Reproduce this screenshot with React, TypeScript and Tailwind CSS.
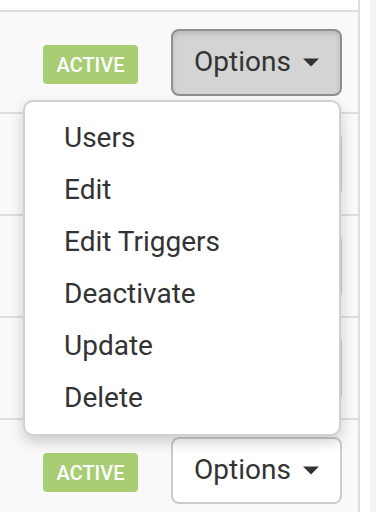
const rows = [0, 1, 2, 3, 4]
const menuItems = ["Users", "Edit", "Edit Triggers", "Deactivate", "Update", "Delete"]

function Caret() {
  return (
    <svg width="16" height="9" viewBox="0 0 16 9" className="shrink-0">
      <path d="M0 0.5 L16 0.5 L8 8.5 Z" fill="#333" />
    </svg>
  )
}

function OptionsButton({ open }: { open?: boolean }) {
  return (
    <button
      className={
        open
          ? "flex h-[67px] w-[171px] items-center justify-center gap-[12px] rounded-[8px] border-2 border-[#8f8f8f] bg-[#d4d4d4] text-[28px] text-[#333] shadow-[inset_0_3px_5px_rgba(0,0,0,0.125)]"
          : "flex h-[67px] w-[171px] items-center justify-center gap-[12px] rounded-[8px] border-2 border-[#cccccc] bg-white text-[28px] text-[#333]"
      }
    >
      <span className="leading-none">Options</span>
      <Caret />
    </button>
  )
}

export default function App() {
  return (
    <div className="relative flex h-[512px] w-[376px] overflow-hidden bg-white font-['Roboto',sans-serif]">
      <div className="w-[360px] shrink-0 border-r-2 border-[#dddddd]">
        <div className="h-[10px] bg-white" />
        {rows.map((r) => (
          <div
            key={r}
            className="flex h-[102px] items-center gap-[33px] border-t-2 border-[#dddddd] bg-[#f9f9f9] pl-[43px]"
          >
            <span className="mt-[5px] flex h-[39px] w-[95px] items-center justify-center rounded-[4px] bg-[#a8cd73] text-[20px] font-medium text-white">
              ACTIVE
            </span>
            <OptionsButton open={r === 0} />
          </div>
        ))}
      </div>
      <div className="w-[10px] shrink-0 bg-white" />
      <div className="flex-1 bg-[#f4f4f4]" />

      <div className="absolute left-[23px] top-[100px] w-[318px] rounded-[10px] border-2 border-[#d0d0d0] bg-white py-[10px] shadow-[0_6px_14px_rgba(0,0,0,0.18)]">
        {menuItems.map((item) => (
          <div key={item} className="flex h-[52px] items-center pl-[39px] text-[28px] text-[#333]">
            {item}
          </div>
        ))}
      </div>
    </div>
  )
}
